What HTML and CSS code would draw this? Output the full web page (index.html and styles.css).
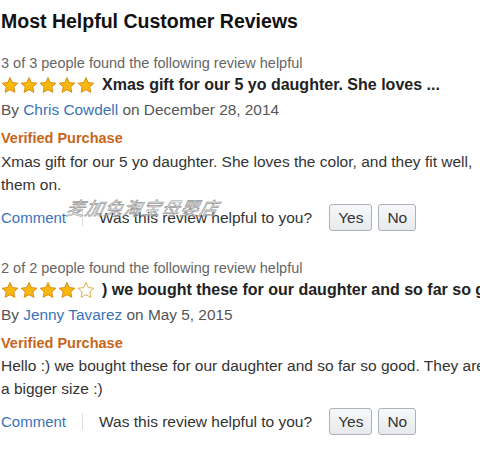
FILE: index.html
```html
<!DOCTYPE html>
<html>
<head>
<meta charset="utf-8">
<link rel="stylesheet" href="styles.css">
</head>
<body>
<div class="page">
  <h2 class="title">Most Helpful Customer Reviews</h2>

  <div class="review">
    <div class="helpful-count">3 of 3 people found the following review helpful</div>
    <div class="headline">
      <span class="stars">
        <svg class="star" viewBox="0 0 20 19"><path class="full" d="M10 1.2l2.6 5.6 6.1.7-4.5 4.2 1.2 6-5.4-3-5.4 3 1.2-6-4.5-4.2 6.1-.7z"/></svg>
        <svg class="star" viewBox="0 0 20 19"><path class="full" d="M10 1.2l2.6 5.6 6.1.7-4.5 4.2 1.2 6-5.4-3-5.4 3 1.2-6-4.5-4.2 6.1-.7z"/></svg>
        <svg class="star" viewBox="0 0 20 19"><path class="full" d="M10 1.2l2.6 5.6 6.1.7-4.5 4.2 1.2 6-5.4-3-5.4 3 1.2-6-4.5-4.2 6.1-.7z"/></svg>
        <svg class="star" viewBox="0 0 20 19"><path class="full" d="M10 1.2l2.6 5.6 6.1.7-4.5 4.2 1.2 6-5.4-3-5.4 3 1.2-6-4.5-4.2 6.1-.7z"/></svg>
        <svg class="star" viewBox="0 0 20 19"><path class="full" d="M10 1.2l2.6 5.6 6.1.7-4.5 4.2 1.2 6-5.4-3-5.4 3 1.2-6-4.5-4.2 6.1-.7z"/></svg>
      </span>
      <span class="review-title">Xmas gift for our 5 yo daughter. She loves ...</span>
    </div>
    <div class="byline">By <a class="link">Chris Cowdell</a> on December 28, 2014</div>
    <div class="verified">Verified Purchase</div>
    <div class="body">Xmas gift for our 5 yo daughter. She loves the color, and they fit well,<br>them on.</div>
    <div class="actions">
      <a class="link comment">Comment</a>
      <span class="sep"></span>
      <span class="question">Was this review helpful to you?</span>
      <span class="btn">Yes</span>
      <span class="btn">No</span>
      <span class="watermark">麦加兔淘宝母婴店</span>
    </div>
  </div>

  <div class="review review-second">
    <div class="helpful-count">2 of 2 people found the following review helpful</div>
    <div class="headline">
      <span class="stars">
        <svg class="star" viewBox="0 0 20 19"><path class="full" d="M10 1.2l2.6 5.6 6.1.7-4.5 4.2 1.2 6-5.4-3-5.4 3 1.2-6-4.5-4.2 6.1-.7z"/></svg>
        <svg class="star" viewBox="0 0 20 19"><path class="full" d="M10 1.2l2.6 5.6 6.1.7-4.5 4.2 1.2 6-5.4-3-5.4 3 1.2-6-4.5-4.2 6.1-.7z"/></svg>
        <svg class="star" viewBox="0 0 20 19"><path class="full" d="M10 1.2l2.6 5.6 6.1.7-4.5 4.2 1.2 6-5.4-3-5.4 3 1.2-6-4.5-4.2 6.1-.7z"/></svg>
        <svg class="star" viewBox="0 0 20 19"><path class="full" d="M10 1.2l2.6 5.6 6.1.7-4.5 4.2 1.2 6-5.4-3-5.4 3 1.2-6-4.5-4.2 6.1-.7z"/></svg>
        <svg class="star" viewBox="0 0 20 19"><path class="empty" d="M10 1.2l2.6 5.6 6.1.7-4.5 4.2 1.2 6-5.4-3-5.4 3 1.2-6-4.5-4.2 6.1-.7z"/></svg>
      </span>
      <span class="review-title">) we bought these for our daughter and so far so good</span>
    </div>
    <div class="byline">By <a class="link">Jenny Tavarez</a> on May 5, 2015</div>
    <div class="verified">Verified Purchase</div>
    <div class="body">Hello :) we bought these for our daughter and so far so good. They are<br>a bigger size :)</div>
    <div class="actions">
      <a class="link comment">Comment</a>
      <span class="sep"></span>
      <span class="question">Was this review helpful to you?</span>
      <span class="btn">Yes</span>
      <span class="btn">No</span>
    </div>
  </div>
</div>
</body>
</html>
```

FILE: styles.css
```css
html, body {
  margin: 0;
  padding: 0;
  background: #fff;
  overflow: hidden;
}

.page {
  width: 479px;
  overflow: hidden;
  padding-left: 1px;
  font-family: Arial, "Liberation Sans", "Noto Sans CJK SC", sans-serif;
  color: #333;
}

.title {
  margin: 9px 0 19px;
  font-size: 19.5px;
  line-height: 24px;
  font-weight: bold;
  color: #111;
  white-space: nowrap;
}

.review {
  margin-bottom: 26px;
}

.helpful-count {
  font-size: 14.5px;
  line-height: 22px;
  color: #666;
  white-space: nowrap;
}

.headline {
  display: flex;
  align-items: center;
  height: 22px;
  white-space: nowrap;
}

.stars {
  display: flex;
  gap: 1px;
  margin-right: 7px;
}

.star {
  width: 18px;
  height: 18px;
  display: block;
}

.full {
  fill: #f7b70d;
  stroke: #d8860b;
  stroke-width: 1;
  stroke-linejoin: round;
}

.empty {
  fill: #fff;
  stroke: #d9a53a;
  stroke-width: 1;
  stroke-linejoin: round;
}

.review-title {
  font-size: 16px;
  font-weight: bold;
  color: #222;
}

.byline {
  margin-top: 2px;
  font-size: 15.4px;
  line-height: 24px;
  color: #555;
  white-space: nowrap;
}

.link {
  color: #3a73b8;
  text-decoration: none;
}

.verified {
  margin-top: 4px;
  font-size: 14.5px;
  line-height: 24px;
  font-weight: bold;
  color: #c7661a;
}

.body {
  font-size: 15.5px;
  line-height: 23px;
  color: #333;
  white-space: nowrap;
}

.review-second .body {
  margin-top: -1px;
}

.actions {
  position: relative;
  display: flex;
  align-items: center;
  height: 27px;
  margin-top: 8px;
  font-size: 15.5px;
  white-space: nowrap;
}

.comment {
  font-size: 15px;
}

.sep {
  width: 1px;
  height: 17px;
  background: #ddd;
  margin: 0 16px 0 16px;
}

.question {
  color: #333;
  margin-right: 17px;
}

.btn {
  display: inline-flex;
  align-items: center;
  justify-content: center;
  height: 25px;
  padding: 0 8px;
  margin-right: 6px;
  border: 1px solid #adb1b8;
  border-radius: 3px;
  background: linear-gradient(#f7f8fa, #e7e9ec);
  color: #333;
  font-size: 15.5px;
}

.watermark {
  position: absolute;
  left: 66px;
  top: -10px;
  font-family: "Noto Sans CJK SC", sans-serif;
  font-size: 18px;
  font-style: italic;
  letter-spacing: 1px;
  color: rgba(255, 255, 255, 0.3);
  -webkit-text-stroke: 0.7px #999;
  transform: skewX(-12deg);
}
```
